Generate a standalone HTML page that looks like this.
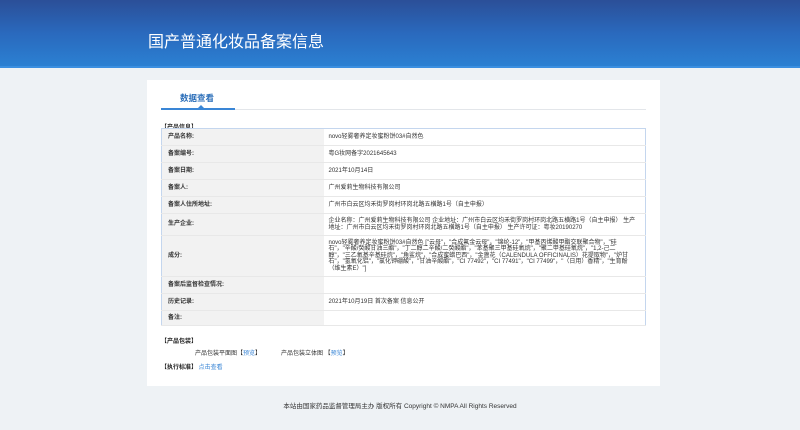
<!DOCTYPE html>
<html><head><meta charset="utf-8"><style>
*{margin:0;padding:0;box-sizing:border-box}
body{width:800px;height:430px;background:#eef2f5;font-family:"Liberation Sans","Noto Sans CJK SC",sans-serif;position:relative;overflow:hidden}
.hd{position:absolute;left:0;top:0;width:800px;height:68px;background:linear-gradient(180deg,#2b4f98 0%,#2a69bd 50%,#2b80d2 100%);border-bottom:2px solid #3b8fe0}
.hd h1{position:absolute;left:148px;top:28px;font-size:16px;font-weight:normal;color:#fff;letter-spacing:0}
.card{position:absolute;left:147px;top:80px;width:513px;height:306px;background:#fff}
.tab{position:absolute;left:33px;top:12px;font-size:8.5px;color:#2a6db8;font-weight:bold}
.line{position:absolute;left:14px;top:29px;width:485px;height:1px;background:#e3e6ea}
.uline{position:absolute;left:14px;top:28px;width:74px;height:2px;background:#3a86d6}
.tri{position:absolute;left:51px;top:25px;width:0;height:0;border-left:3px solid transparent;border-right:3px solid transparent;border-bottom:3px solid #3a86d6}
.sec{position:absolute;left:14px;font-size:6px;font-weight:bold;color:#222}
table{position:absolute;left:14px;top:48px;width:485px;border-collapse:collapse;border:1px solid #c4d6ee;font-size:6px;color:#333}
td{border-bottom:1px solid #e8e8e8;padding:0 0 0 6px;vertical-align:middle;line-height:6.5px}
td.l{width:162px;background:#f2f2f2;font-weight:bold;color:#333}
td.v{padding-left:5px;padding-right:8px}
.a{color:#3a86d6}
.t{position:absolute;font-size:6px;color:#333}
.ft{position:absolute;top:400px;left:0;width:800px;text-align:center;font-size:6.5px;color:#333}
</style></head><body>
<div class="hd"><h1>国产普通化妆品备案信息</h1></div>
<div class="card">
<div class="tab">数据查看</div>
<div class="line"></div><div class="uline"></div><div class="tri"></div>
<div class="sec" style="top:42px">【产品信息】</div>
<table>
<tr style="height:17px"><td class="l">产品名称:</td><td class="v">novo轻雾奢养定妆蜜粉饼03#自然色</td></tr>
<tr style="height:17px"><td class="l">备案编号:</td><td class="v">粤G妆网备字2021645643</td></tr>
<tr style="height:17px"><td class="l">备案日期:</td><td class="v">2021年10月14日</td></tr>
<tr style="height:17px"><td class="l">备案人:</td><td class="v">广州爱莉生物科技有限公司</td></tr>
<tr style="height:17px"><td class="l">备案人住所地址:</td><td class="v">广州市白云区均禾街罗岗村环岗北路五横路1号（自主申报）</td></tr>
<tr style="height:22px"><td class="l">生产企业:</td><td class="v">企业名称：广州爱莉生物科技有限公司 企业地址：广州市白云区均禾街罗岗村环岗北路五横路1号（自主申报） 生产地址：广州市白云区均禾街罗岗村环岗北路五横路1号（自主申报） 生产许可证：粤妆20190270</td></tr>
<tr style="height:41px"><td class="l">成分:</td><td class="v">novo轻雾奢养定妆蜜粉饼03#自然色 ["云母"，"合成氟金云母"，"锦纶-12"，"甲基丙烯酸甲酯交联聚合物"，"硅石"，"辛酸/癸酸甘油三酯"，"丁二醇二辛酸/二癸酸酯"，"苯基聚三甲基硅氧烷"，"聚二甲基硅氧烷"，"1,2-己二醇"，"三乙氧基辛基硅烷"，"角鲨烷"，"合成蜜蜡巴西"，"金盏花（CALENDULA OFFICINALIS）花提取物"，"炉甘石"，"氢氧化铝"，"氯化钾硼酸"，"甘油辛酸酯"，"CI 77492"，"CI 77491"，"CI 77499"，"（日用）香精"，"生育酚（维生素E）"]</td></tr>
<tr style="height:17px"><td class="l">备案后监督检查情况:</td><td class="v"></td></tr>
<tr style="height:17px"><td class="l">历史记录:</td><td class="v">2021年10月19日 首次备案 信息公开</td></tr>
<tr style="height:15px"><td class="l">备注:</td><td class="v"></td></tr>
</table>
<div class="sec" style="top:256px">【产品包装】</div>
<div class="t" style="left:48px;top:268px">产品包装平面图【<span class="a">预览</span>】</div>
<div class="t" style="left:134px;top:268px">产品包装立体图 【<span class="a">预览</span>】</div>
<div class="sec" style="top:282px">【执行标准】 <span class="a" style="font-weight:normal">点击查看</span></div>
</div>
<div class="ft">本站由国家药品监督管理局主办 版权所有 Copyright © NMPA All Rights Reserved</div>
</body></html>
